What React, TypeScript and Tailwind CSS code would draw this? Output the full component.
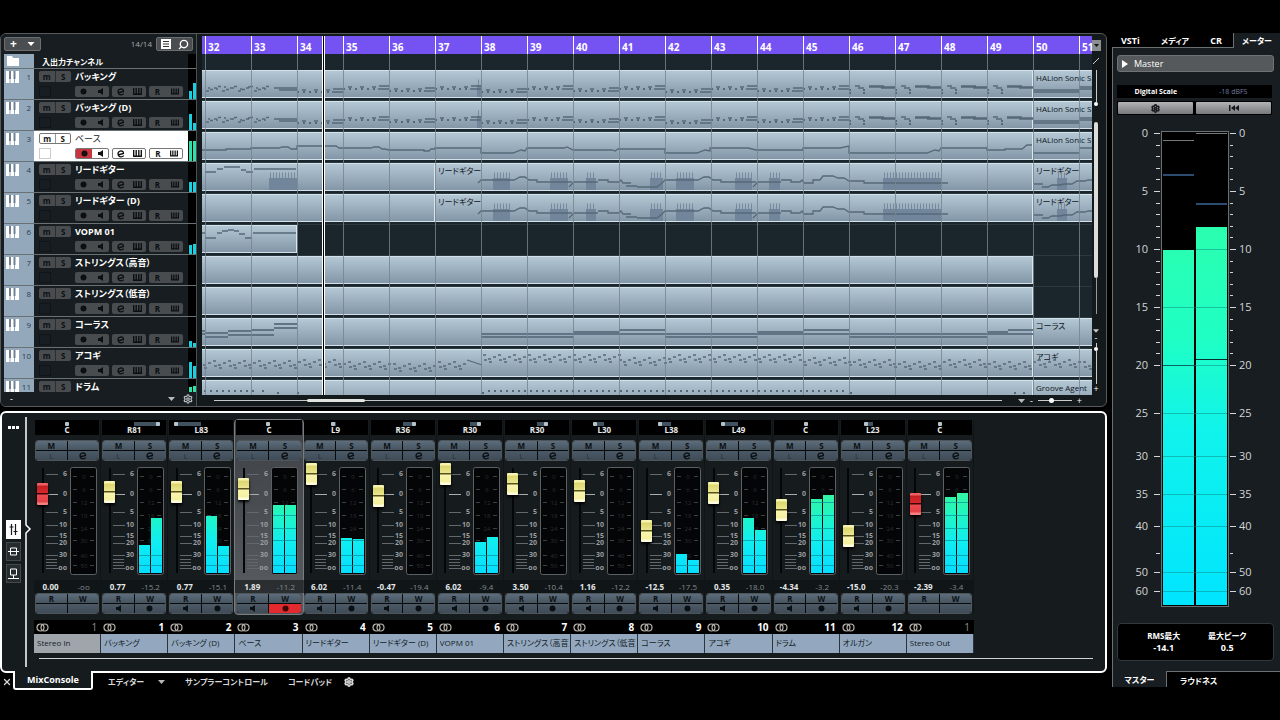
import React from 'react'
import { Settings, Search, X } from 'lucide-react'

type Clip = { width?: number; label?: string }
type Wave = { thin?: string; thick?: string; dots?: string; blocks?: number[][] }
type Track = { name: string; level: number[]; hot?: boolean; selected?: boolean; clips: Clip[]; wave: Wave }

const BAR = 46
const bars = Array.from({ length: 20 }, (_, i) => 32 + i)

// bar number -> x inside the lane
const bx = (bar: number) => Math.round(3 + BAR * (bar - 32))
const seg = (from: number, to: number, y: number) => `M${bx(from)} ${y}H${bx(to)}`

// backing guitar riff
const riff = () => {
    let thin = ''
    let dots = ''
    for (let b = 34; b < 46; b++) {
        const y = b === 34 || b === 38 || b === 42 ? 22 : b % 2 ? 19 : 21
        dots += seg(b, b + 0.75, y)
        for (let i = 0; i < 3; i++) thin += seg(b + 0.1 + i * 0.26, b + 0.2 + i * 0.26, y - 2)
        thin += seg(b + 0.75, b + 1, y) + seg(b + 0.78, b + 1, y - 3)
    }
    for (let b = 46; b < 50; b++) {
        dots += seg(b, b + 0.12, 20) + seg(b, b + 0.12, 23) + seg(b + 0.3, b + 0.42, 20) + seg(b + 0.3, b + 0.42, 23)
        thin += seg(b + 0.12, b + 0.24, 16) + seg(b + 0.2, b + 0.32, 18)
        thin += seg(b + 0.44, b + 0.75, 16) + seg(b + 0.44, b + 1, 17) + seg(b + 0.7, b + 1, 18)
    }
    for (let i = 0; i < 16; i++) {
        const x = 4 + i * 4
        thin += `M${x} ${21 - (i % 4) * 1.5}h3`
        if (i % 2) thin += `M${x - 2} ${19 - (i % 3)}h2`
    }
    thin += seg(33.5, 34, 18) + seg(33.6, 34, 20)
    thin += seg(50, 51, 20) + seg(50, 51, 22) + seg(51, 51.5, 17) + seg(51, 51.5, 19)
    return { thin, dots }
}

const bassLine =
    `M0 18H${bx(32.45)}V17H${bx(33)}V16H${bx(33.6)}l3 -1h6l3 2H${bx(34)}V14H${bx(34.85)}l3 2H${bx(35.6)}l3 -1h5l3 2h3l4 1H${bx(36.75)}v1h5l2 -2H${bx(37)}V16H${bx(38)}` +
    `V21H${bx(38.7)}l8 -3l4 1l2 -3H${bx(39.8)}l3 -1l6 3H${bx(40.85)}l3 1l3 -2H${bx(42)}V21H${bx(42.7)}l8 -3l5 1V16H${bx(43.8)}l8 2H${bx(45)}V16H${bx(45.8)}l9 -2V21H${bx(47.7)}l8 -3l4 1l2 -3H${bx(49)}V18H${bx(49.4)}V17H${bx(49.75)}l5 -4h5` +
    seg(50, 51, 21) + seg(51, 51.5, 16)

const phrase = (x: number) => `M${x} 20l3 -3h33l6 -3h5l4 3h8v2h35`

const leadStart = 'M3 9H14M15 6H21M22 4H38M39 7H44M44 9H51M52 6H94'
const leadLine =
    phrase(276) + 'M367 24l5 -5h24M396 17h10v2h11l2 -2l2 3h8M424 23h11M435 24h20l5 -4' +
    phrase(460) + 'M551 24l5 -5h23M579 17h10v2h9l2 -2l2 3h9v-3h7l3 -4h10l5 2h6l5 3h15v2h84' +
    'M832 21h9M840 24h6l4 -2h8l4 -1h8l5 -3h8l3 -1h9v2h6'

const leadBlocks = [
    [67, 28], [291, 17], [348, 18], [384, 10], [448, 13], [474, 18], [533, 17], [567, 11], [681, 58], [855, 10],
]

const strum = () => {
    let thin = ''
    for (let x = 1, i = 0; x < 890; x += 5, i++) {
        const bar = Math.floor((x - 3) / BAR) + 32
        if (bar === 37 && x > 262) continue
        const base = bar < 34 ? 14 : bar === 34 ? 13 : bar < 38 ? 15 + (bar % 2 ? 0 : 2) : bar < 41 ? 8 : bar === 41 ? 11 : bar < 46 ? 8 + (bar === 45 ? 3 : 0) : 13 + (bar % 2) * 2
        const up = i % 3
        thin += `M${x} ${base + 2 - up * 2}h3`
        if (up !== 1) thin += `M${x + 1} ${base + 5 - up}h3`
    }
    return thin + 'M265 11l15 5'
}

const choir =
    'M0 13H3M0 16H3' + seg(32, 32.5, 15) + seg(32, 32.5, 19) + seg(32.5, 33, 13) + seg(32.5, 33, 17) + seg(33, 33.5, 12) + seg(33, 33.5, 17) + seg(33.5, 34, 6) + seg(33.5, 34, 10) +
    [[38, 40], [42, 44], [46, 49]].map(([a, b]) => seg(a, b, 16) + seg(a, b, 19)).join('') +
    [40, 44].map((b) => seg(b, b + 1, 14) + seg(b, b + 1, 16) + seg(b + 1, b + 2, 12) + seg(b + 1, b + 2, 16)).join('') +
    seg(49, 49.45, 14) + seg(49, 50, 16) + seg(49.45, 50, 12)

const full = [{ width: 831 }]
const halion = [{ width: 831 }, { label: 'HALion Sonic S' }]
const lead = [{ width: 233 }, { width: 598, label: 'リードギター' }, { label: 'リードギター' }]

const tracks: Track[] = [
    { name: 'バッキング', level: [8, 16], clips: halion, wave: { ...riff(), blocks: [[275, 5]] } },
    { name: 'バッキング (D)', level: [16, 7], clips: halion, wave: { ...riff(), blocks: [[275, 5]] } },
    { name: 'ベース', level: [20, 20], hot: true, selected: true, clips: halion, wave: { thin: bassLine } },
    { name: 'リードギター', level: [10, 10], clips: lead, wave: { thin: leadStart + leadLine, blocks: leadBlocks } },
    { name: 'リードギター (D)', level: [], clips: lead, wave: { thin: leadLine, blocks: leadBlocks.slice(1) } },
    { name: 'VOPM 01', level: [9, 10], clips: [{ width: 95 }], wave: { thin: 'M0 8H3M3 13H14M15 8H20M20 6H26M26 5H32M32 6H37M37 9H43M43 13H50M51 8H94' } },
    { name: 'ストリングス（高音）', level: [], clips: full, wave: {} },
    { name: 'ストリングス（低音）', level: [], clips: full, wave: {} },
    { name: 'コーラス', level: [6, 4], clips: [{ width: 831 }, { label: 'コーラス' }], wave: { thick: choir } },
    { name: 'アコギ', level: [16, 12], clips: [{ width: 831 }, { label: 'アコギ' }], wave: { thin: strum() } },
    { name: 'ドラム', level: [5, 6], hot: true, clips: [{ width: 831 }, { label: 'Groove Agent' }], wave: { dots: 'M2 11H52M60 11h2M75 13h2M95 13h2M280 13h2M286 11H645M648 13h2M812 13h2M821 13h2' } },
]

type Strip = { name: string; no: number; pan: number; cap: number; db: string; peak: string; level: number[]; io?: boolean; selected?: boolean }

// cap is the fader centre, in pixels from the top of the fader area
const strips: Strip[] = [
    { name: 'Stereo In', no: 1, pan: 0, cap: 32, db: '0.00', peak: '-oo', level: [], io: true },
    { name: 'バッキング', no: 1, pan: 81, cap: 30, db: '0.77', peak: '-15.2', level: [28, 55] },
    { name: 'バッキング (D)', no: 2, pan: -83, cap: 30, db: '0.77', peak: '-15.1', level: [57, 27] },
    { name: 'ベース', no: 3, pan: 0, cap: 27, db: '1.89', peak: '-11.2', level: [68, 68], selected: true },
    { name: 'リードギター', no: 4, pan: -9, cap: 12, db: '6.02', peak: '-11.4', level: [35, 34] },
    { name: 'リードギター (D)', no: 5, pan: 36, cap: 34, db: '-0.47', peak: '-19.4', level: [] },
    { name: 'VOPM 01', no: 6, pan: 30, cap: 12, db: '6.02', peak: '-9.4', level: [31, 36] },
    { name: 'ストリングス（高音）', no: 7, pan: 30, cap: 22, db: '3.50', peak: '-10.4', level: [] },
    { name: 'ストリングス（低音）', no: 8, pan: -30, cap: 29, db: '1.16', peak: '-12.2', level: [] },
    { name: 'コーラス', no: 9, pan: -38, cap: 69, db: '-12.5', peak: '-17.5', level: [19, 13] },
    { name: 'アコギ', no: 10, pan: -49, cap: 31, db: '0.35', peak: '-18.0', level: [55, 43] },
    { name: 'ドラム', no: 11, pan: 0, cap: 48, db: '-4.34', peak: '-3.2', level: [74, 78] },
    { name: 'オルガン', no: 12, pan: -23, cap: 74, db: '-15.0', peak: '-20.3', level: [] },
    { name: 'Stereo Out', no: 1, pan: 0, cap: 42, db: '-2.39', peak: '-3.4', level: [76, 80], io: true },
]

const Piano = () => (
    <svg width="13" height="12" viewBox="0 0 13 12" className="shrink-0">
        <path d="M0 0h13v12H0z" fill="#fff" />
        <path d="M4 7v5M8.500 7v5" stroke="#8fa5b8" />
        <path d="M3 0h2v8H3zM7.500 0h2v8h-2z" fill="#6f8294" />
    </svg>
)

const Dot = () => <svg width="7" height="7" viewBox="0 0 7 7"><circle cx="3.500" cy="3.500" r="3" fill="currentColor" /></svg>

const Speaker = () => <svg width="5" height="7" viewBox="0 0 5 7"><path d="M5 0v7L2 5H0V2h2z" fill="currentColor" /></svg>

const Edit = () => (
    <svg width="8" height="8" viewBox="0 0 8 8" fill="none" stroke="currentColor" strokeWidth="1.300">
        <path d="M1 5l5.500 -1.500q0 -2.700 -2.500 -2.700q-3 .3 -3 3.200q.3 2.900 3 2.900q1.800 0 2.800 -1.200" />
    </svg>
)

const Keys = ({ w = 9 }: { w?: number }) => (
    <svg width={w} height="7" viewBox="0 0 9 7" fill="none" stroke="currentColor" strokeWidth="1.400">
        <path d="M.7 0v6.200h7.600V0M3.200 0v6M5.800 0v6" />
    </svg>
)

const Link = () => (
    <svg width="13" height="9" viewBox="0 0 13 9" fill="none" stroke="#b9b5ae" strokeWidth="1.200">
        <circle cx="4.500" cy="4.500" r="3.500" />
        <circle cx="8.500" cy="4.500" r="3.500" />
    </svg>
)

const Down = () => <svg width="7" height="4" viewBox="0 0 7 4" className="shrink-0"><path d="M0 0h7L3.500 4z" fill="#b6babc" /></svg>

const TrackRow = ({ track, index }: { track: Track; index: number }) => {
    const last = index === tracks.length - 1
    const group = track.selected
        ? 'flex w-[34px] h-[11px] border border-[#777] rounded-[2px] text-[#111] overflow-hidden'
        : 'flex w-[34px] h-[11px] bg-[#484c4f] rounded-[2px] text-[#0c0f11]'
    const cell = 'flex-1 flex items-center justify-center text-[8px] leading-[9px] font-bold'
    return (
        <li className={last ? 'flex h-[13px] overflow-hidden' : 'flex h-[31px] border-b border-[#6a7174]'}>
            <div className="w-[30px] bg-[#93a8bb] flex items-start justify-between pl-[2px] pr-[3px] pt-[2px] text-[8px] leading-[12px] text-[#2f3d4a]">
                <Piano />
                <span>{index + 1}</span>
            </div>
            <div className={track.selected ? 'w-[154px] pl-[5px] pt-[2px] bg-white text-[#16191b]' : 'w-[154px] pl-[5px] pt-[2px] bg-[#171d20] text-white'}>
                <div className="flex h-[11px] items-center">
                    <div className={track.selected ? 'flex w-[32px] h-[11px] border border-[#777] rounded-[2px] text-[#111] divide-x divide-[#999]' : 'flex w-[32px] h-[11px] bg-[#484c4f] rounded-[2px] text-[#0c0f11] divide-x divide-[#2a2e30]'}>
                        <button className={cell}>m</button>
                        <button className={cell}>S</button>
                    </div>
                    <span className={track.selected ? 'ml-1 text-[9px] leading-[11px] whitespace-nowrap' : 'ml-1 text-[9px] leading-[11px] font-bold whitespace-nowrap'}>{track.name}</span>
                </div>
                {!last && (
                    <div className="flex mt-1 gap-[3px]">
                        <input
                            type="checkbox"
                            aria-label={'freeze ' + track.name}
                            className={track.selected ? 'appearance-none w-3 h-[11px] border border-[#ccc] mr-[21px]' : 'appearance-none w-3 h-[11px] border border-[#101517] mr-[21px]'}
                        />
                        <div className={group}>
                            <button aria-label="record" className={track.selected ? cell + ' bg-[#c73540]' : cell}><Dot /></button>
                            <button aria-label="monitor" className={cell}><Speaker /></button>
                        </div>
                        <div className={group}>
                            <button aria-label="edit" className={cell}><Edit /></button>
                            <button aria-label="instrument" className={cell}><Keys /></button>
                        </div>
                        <div className={group}>
                            <button className={cell}>R</button>
                            <button aria-label="write" className={cell}><Keys w={8} /></button>
                        </div>
                    </div>
                )}
            </div>
            <div className="w-2 bg-black flex items-end justify-center gap-px">
                {track.level.map((h, i) => (
                    <div key={i} className={track.hot ? 'w-[3px] bg-[#2fe0a8]' : 'w-[3px] bg-[#19cfe0]'} style={{ height: h }} />
                ))}
            </div>
        </li>
    )
}

const TrackList = () => (
    <div className="w-[196px] shrink-0 pl-[3px] bg-[#171d20] border-r border-[#4b5255]">
        <div className="flex items-center h-5">
            <button aria-label="add track" className="flex items-center justify-around w-[37px] h-[14px] bg-[#4a4e50] border border-[#6b6f71] rounded-[2px] text-white text-[12px] leading-[12px] font-bold">
                <span>+</span>
                <svg width="8" height="4" viewBox="0 0 7 4"><path d="M0 0h7L3.500 4z" fill="#fff" /></svg>
            </button>
            <span className="ml-auto text-[8px] text-[#a6aaac]">14/14</span>
            <div className="flex w-[37px] h-[14px] ml-1 mr-[3px] bg-[#4a4e50] border border-[#6b6f71] rounded-[2px] text-white">
                <button aria-label="track list" className="flex-1 flex items-center justify-center">
                    <svg width="10" height="10" viewBox="0 0 10 10"><path d="M0 0h10v10H0z" fill="#fff" /><path d="M2 2.500h6M2 5h6M2 7.500h6" stroke="#333" /></svg>
                </button>
                <button aria-label="find track" className="flex-1 flex items-center justify-center"><Search className="w-[11px] h-[11px] -scale-x-100" strokeWidth={3} /></button>
            </div>
        </div>
        <div className="flex h-[15px] border-b border-[#6a7174]">
            <div className="w-[30px] bg-[#93a8bb] pl-[3px] pt-[2px]">
                <svg width="12" height="10" viewBox="0 0 12 10"><path d="M0 0h5l1 2h6v8H0z" fill="#fff" /></svg>
            </div>
            <div className="flex-1 pl-2 text-[8px] leading-[15px] font-bold text-white">入出力チャンネル</div>
            <div className="w-2 bg-black" />
        </div>
        <ul>
            {tracks.map((t, i) => <TrackRow key={t.name} track={t} index={i} />)}
        </ul>
        <div className="flex items-center h-[14px] pl-[6px] text-white text-[9px] leading-[12px]">
            <span className="mr-auto">-</span>
            <Down />
            <Settings className="w-[10px] h-[10px] ml-2 mr-[3px] text-[#b6babc]" strokeWidth={3} />
        </div>
    </div>
)

const Lane = ({ track, last }: { track: Track; last: boolean }) => (
    <div className={last ? 'relative flex h-[15px] overflow-hidden' : 'relative flex h-[31px] border-b border-[#2a3940]'}>
        {track.clips.map((c, i) => (
            <div
                key={i}
                className={(c.width ? 'shrink-0 border-r border-r-[#dbe7ee]' : 'flex-1 min-w-0') + ' h-[28px] overflow-hidden bg-linear-to-b from-[#b4c7d4] to-[#8397a8] border-y border-y-[#d3e2ea] pl-[3px] text-[8px] leading-[13px] text-[#0e161d] whitespace-nowrap'}
                style={{ width: c.width }}
            >
                {c.label}
            </div>
        ))}
        <svg className="absolute inset-0 w-full h-[28px]" fill="none" stroke="#566979">
            {track.wave.blocks?.map(([x, w]) => (
                <g key={x}>
                    <path d={`M${x} 15h${w}v12h-${w}z`} fill="#71869a" stroke="none" />
                    <path d={`M${x + 1} 12.500H${x + w}`} stroke="#768a9d" strokeWidth="6" strokeDasharray="1 2" />
                </g>
            ))}
            {track.wave.dots && <path d={track.wave.dots} strokeWidth="2" strokeDasharray="2 4" />}
            {track.wave.thick && <path d={track.wave.thick} strokeWidth="2" stroke="#617485" />}
            {track.wave.thin && <path d={track.wave.thin} strokeWidth="1.300" />}
        </svg>
    </div>
)

const Timeline = () => (
    <div className="flex-1 min-w-0 ml-[5px] pt-[2px]">
        <div className="relative overflow-hidden bg-[#1b262c]">
            <div className="flex h-[18px] pl-[3px] bg-[#7553f3]">
                {bars.map((b) => (
                    <div key={b} className="w-[46px] shrink-0 border-l border-white pl-[2px] pt-[5px] text-[10px] leading-[13px] font-bold text-white">{b}</div>
                ))}
            </div>
            <div className="h-4" />
            {tracks.map((t, i) => <Lane key={t.name} track={t} last={i === tracks.length - 1} />)}
            {/* bar lines */}
            <div className="absolute inset-x-0 top-[18px] bottom-0 flex pl-[3px] pointer-events-none">
                {bars.map((b) => <div key={b} className="w-[46px] shrink-0 border-l border-[#76848e]/80" />)}
            </div>
            {/* playhead */}
            <div className="absolute inset-y-0 left-[120px] w-[3px] bg-black border-x border-white" />
        </div>
        <div className="flex items-center h-[11px] pl-3 gap-2">
            <div className="flex-1 flex items-center h-px bg-[#c4c8ca] pl-[93px]">
                <div className="w-[58px] h-[3px] rounded bg-[#e4e4df]" />
            </div>
            <div className="flex items-center gap-[5px] ml-2 text-white text-[9px] leading-[10px]">
                <Down />
                <span>-</span>
                <input
                    type="range"
                    aria-label="horizontal zoom"
                    defaultValue={40}
                    className="appearance-none w-[34px] h-[5px] bg-[linear-gradient(#ccc,#ccc)] bg-[length:100%_1px] bg-center bg-no-repeat [&::-webkit-slider-thumb]:appearance-none [&::-webkit-slider-thumb]:w-[5px] [&::-webkit-slider-thumb]:h-[5px] [&::-webkit-slider-thumb]:rounded-full [&::-webkit-slider-thumb]:bg-white"
                />
                <span className="mr-[10px]">+</span>
            </div>
        </div>
    </div>
)

const VerticalScroll = () => (
    <div className="w-[14px] shrink-0 flex flex-col items-center pr-[6px] pt-[6px] pb-2 text-white text-[9px] leading-[10px]">
        <button aria-label="ruler menu" className="w-[9px] h-[11px] bg-[#8b8f91] flex items-center justify-center">
            <svg width="5" height="3" viewBox="0 0 5 3"><path d="M0 0h5L2.500 3z" fill="#111" /></svg>
        </button>
        <svg width="6" height="6" className="mt-[7px]"><path d="M0 6L6 0" stroke="#ccc" /></svg>
        <div className="w-px h-[32px] mt-[6px] bg-[#ccc]" />
        <div className="w-1 h-1 rounded-full bg-white" />
        <div className="w-1 h-[156px] mt-[16px] rounded bg-[#dcdcda]" />
        <div className="w-px h-[36px] bg-[#999]" />
        <svg width="6" height="4" viewBox="0 0 7 4" className="mt-[15px] shrink-0"><path d="M0 0h7L3.500 4z" fill="#ccc" /></svg>
        <span>-</span>
        <div className="w-px h-1 bg-[#ccc]" />
        <div className="w-1 h-1 rounded-full bg-white" />
        <div className="w-px h-[33px] bg-[#ccc]" />
        <span>+</span>
    </div>
)

const faderTicks: [number, string][] = [[12, '6'], [32, '0'], [50, '5'], [63, '10'], [74, '15'], [81, '20'], [93, '30'], [106, 'oo']]
const meterTicks: [number, string][] = [[14, '0'], [27, '6'], [40, '12'], [53, '18'], [66, '24'], [78, '30'], [93, '40'], [103, '50']]

const Fader = ({ strip }: { strip: Strip }) => (
    <div className="flex h-[118px] pl-[3px]">
        <input
            type="range"
            aria-label={strip.name + ' volume'}
            min={0}
            max={92}
            defaultValue={104 - strip.cap}
            className={
                'relative appearance-none [writing-mode:vertical-lr] [direction:rtl] w-[11px] h-[114px] mt-px bg-[linear-gradient(#050607,#050607)] bg-[length:2px_105px] bg-center bg-no-repeat [&::-webkit-slider-thumb]:appearance-none [&::-webkit-slider-thumb]:w-[11px] [&::-webkit-slider-thumb]:h-[22px] [&::-webkit-slider-thumb]:rounded-[1px] [&::-webkit-slider-thumb]:shadow-[0_2px_3px_#000] ' +
                (strip.io
                    ? '[&::-webkit-slider-thumb]:bg-[linear-gradient(#f06060_2px,#c01f24_3px,#d8282e_10px,#3a0506_10px,#3a0506_11px,#ee4a50_12px,#e04046_19px,#f58080_20px)]'
                    : '[&::-webkit-slider-thumb]:bg-[linear-gradient(#f7f4b0_2px,#dcd66e_3px,#ece690_10px,#55521c_10px,#55521c_11px,#f8f5ae_12px,#f5f0a0_19px,#fffde0_20px)]')
            }
        />
        <svg width="22" height="118" className="overflow-visible">
            {faderTicks.map(([y, label]) => (
                <g key={label}>
                    <path d={`M-2 ${y + 0.5}H10`} stroke={label === '0' ? '#a9adaf' : '#62686b'} />
                    <text x="19" y={y + 2} textAnchor="end" fontSize="7" fontWeight="bold" fill="#999da0">{label}</text>
                </g>
            ))}
            <path d="M-2 97.500H9M-2 100.500H9M-2 103.500H9" stroke="#62686b" />
        </svg>
        <svg width="27" height="118">
            <defs>
                <linearGradient id="level" gradientUnits="userSpaceOnUse" x1="0" y1="30" x2="0" y2="112">
                    <stop offset="0" stopColor="#35f5a0" />
                    <stop offset="0.25" stopColor="#22f5c0" />
                    <stop offset="0.6" stopColor="#10eef0" />
                    <stop offset="1" stopColor="#06dcff" />
                </linearGradient>
            </defs>
            <rect x="0.500" y="5.500" width="26" height="107" rx="2" fill="#040506" stroke="#5c6062" />
            {meterTicks.map(([y, label]) => (
                <g key={label}>
                    <path d={`M3 ${y + 0.5}h4M20 ${y + 0.5}h4`} stroke="#3c4143" />
                    <text x="14" y={y + 3} textAnchor="middle" fontSize="6" fill="#2b3032">{label}</text>
                </g>
            ))}
            {strip.level.map((h, i) => (
                <rect key={i} x={i ? 14 : 2} y={111 - h} width="11" height={h} fill="url(#level)" />
            ))}
            {strip.level.length > 0 && meterTicks.filter(([y]) => y > 111 - Math.min(...strip.level)).map(([y]) => (
                <path key={y} d={`M2 ${y + 0.5}h23`} stroke="#0a8f9a" strokeOpacity="0.7" />
            ))}
        </svg>
    </div>
)

const ChannelStrip = ({ strip }: { strip: Strip }) => {
    const btn = 'h-[9px] flex items-center justify-center bg-linear-to-b from-[#5d6d7c] to-[#46545f] text-[8px] leading-[9px] font-bold text-[#0b1014]'
    const low = 'h-[9px] flex items-center justify-center bg-linear-to-b from-[#4c5966] to-[#3f4c58] text-[8px] leading-[9px]'
    const box = 'grid grid-cols-2 gap-px mx-px bg-[#07090a] border border-[#4e555a] rounded-[3px] overflow-hidden text-[#0b1014]'
    const span = Math.round(Math.abs(strip.pan) * 0.3)
    return (
        <div className="min-w-0">
            <div className={strip.selected ? 'bg-linear-to-b from-[#3d4146] to-[#5a5d61] outline outline-[#7a7d80] rounded-[3px]' : 'border-r border-[#101416]'}>
                <div className="relative h-[15px] mx-px bg-black flex justify-center text-[8px] leading-[20px] font-bold text-[#e6e8e9]">
                    {strip.pan > 0 ? 'R' + strip.pan : strip.pan < 0 ? 'L' + -strip.pan : 'C'}
                    <svg width="64" height="5" className="absolute top-[2px] left-0">
                        <rect x={strip.pan < 0 ? 32 - span : 32} y="0" width={span} height="4" fill="#40525f" />
                        <rect x={30 + Math.sign(strip.pan) * span} y="0" width="4" height="4" rx="1" fill="#b6c3cb" />
                    </svg>
                </div>
                <div className="pt-[5px] pb-px">
                    <div className={box}>
                        <button className={btn}>M</button>
                        <button aria-label="solo" className={btn}>{strip.name !== 'Stereo In' && 'S'}</button>
                        <button className={low + ' text-[#26323c]'}>L</button>
                        <button aria-label="edit channel" className={low}><Edit /></button>
                    </div>
                </div>
                <Fader strip={strip} />
                <div className="flex h-[13px] bg-[#0e1214]/60 text-[8px] leading-[13px] text-center">
                    <span className="flex-1 font-bold text-[#e4e6e7]">{strip.db}</span>
                    <span className="flex-1 text-[#85898b]">{strip.peak}</span>
                </div>
                <div className={box}>
                    <button className={btn}>R</button>
                    <button className={btn}>W</button>
                    <button aria-label="monitor" className={low}>{!strip.io && <Speaker />}</button>
                    <button aria-label="record" className={strip.selected ? 'h-[9px] flex items-center justify-center bg-[#e02a2e] text-[#3d0506]' : low}>{!strip.io && <Dot />}</button>
                </div>
            </div>
            <div className="flex items-center justify-between h-[14px] mt-[6px] pl-[2px] pr-1 bg-black text-[10px] leading-[13px]">
                <Link />
                <span className={strip.io ? 'text-[#8d8f90]' : 'font-bold text-white'}>{strip.no}</span>
            </div>
            <div className={(strip.name === 'Stereo In' ? 'bg-[#9fa5ab]' : 'bg-[#93a8bf]') + ' h-[19px] pl-[3px] pr-px border-r border-[#2b343b] text-[8px] leading-[18px] text-[#141d25]'}>
                <div className="whitespace-nowrap overflow-hidden">{strip.name}</div>
            </div>
        </div>
    )
}

const MixRail = () => (
    <div className="w-[32px] shrink-0 flex">
        <div className="w-[22px] flex flex-col items-center">
            <svg width="11" height="3" className="mt-[13px]"><path d="M0 1.500h11" stroke="#fff" strokeWidth="3" strokeDasharray="3 1" /></svg>
            <button aria-label="faders" className="w-[15px] h-[19px] mt-[91px] bg-white text-[#16191b] flex items-center justify-center">
                <svg width="9" height="11" viewBox="0 0 9 11" fill="none" stroke="currentColor" strokeWidth="1.200"><path d="M2.500 0v11M6.500 0v11M.5 3h4M4.500 7.500h4" /></svg>
            </button>
            <button aria-label="inserts" className="w-[15px] h-[19px] mt-[3px] bg-[#262b2e] border border-[#43484a] text-white flex items-center justify-center">
                <svg width="11" height="9" viewBox="0 0 11 9" fill="none" stroke="currentColor"><path d="M0 4.500h11M2.500 1h6v7h-6z" /></svg>
            </button>
            <button aria-label="sends" className="w-[15px] h-[19px] mt-[3px] bg-[#262b2e] border border-[#43484a] text-white flex items-center justify-center">
                <svg width="11" height="12" viewBox="0 0 11 12" fill="none" stroke="currentColor"><path d="M2.500 1h6v6h-6zM5.500 7v4M0 10.500h11" /></svg>
            </button>
        </div>
        <svg width="8" height="250" className="mt-1 ml-px" fill="none" stroke="#fff" strokeWidth="1.500"><path d="M1 0v108l4 4l-4 4v134" /></svg>
    </div>
)

const LowerZone = () => (
    <>
        <section className="mt-1 border-2 border-white rounded-md bg-[#161b1e]">
            <div className="flex">
                <MixRail />
                <div className="flex-1 min-w-0 pt-[7px]">
                    <div className="grid grid-cols-14 w-[940px]">
                        {strips.map((s, i) => <ChannelStrip key={i} strip={s} />)}
                    </div>
                    <div className="h-px mt-[5px] ml-[5px] mr-3 mb-3 bg-[#d0d2d3]" />
                </div>
            </div>
        </section>
        <nav className="flex h-[17px] text-[8px] leading-[17px] font-bold text-[#d7d9da] whitespace-nowrap">
            <button aria-label="close" className="w-[13px] flex items-center justify-center"><X className="w-[10px] h-[10px]" strokeWidth={3} /></button>
            <button className="relative w-[80px] -mt-[2px] bg-[#161b1e] border-2 border-t-0 border-white rounded-b-[3px] text-[9px] text-white">MixConsole</button>
            <button className="ml-[15px]">エディター</button>
            <button aria-label="editor menu" className="ml-[14px]"><Down /></button>
            <button className="ml-5">サンプラーコントロール</button>
            <button className="ml-5">コードパッド</button>
            <button aria-label="set up tabs" className="ml-3"><Settings className="w-[10px] h-[10px]" strokeWidth={4} /></button>
        </nav>
    </>
)

// dB -> y in the master meter drawing
const scale: [number, number][] = [[0, 10], [5, 68], [10, 126], [15, 184], [20, 242], [25, 290], [30, 333], [35, 371], [40, 403], [50, 449], [60, 468]]
const minor = Array.from({ length: 20 }, (_, i) => i).filter((i) => i % 5).map((i) => Math.round(10 + i * 11.6)).concat(430)

const MasterMeter = () => (
    <svg width="156" height="490" viewBox="0 0 156 490" className="block">
        <defs>
            <linearGradient id="master" gradientUnits="userSpaceOnUse" x1="0" y1="100" x2="0" y2="482">
                <stop offset="0" stopColor="#2bffae" />
                <stop offset="0.3" stopColor="#1fffc4" />
                <stop offset="0.55" stopColor="#10f3ec" />
                <stop offset="1" stopColor="#00e5ff" />
            </linearGradient>
        </defs>
        <rect x="44.500" y="8.500" width="67" height="475" fill="#000" stroke="#6b7072" />
        <rect x="46" y="127" width="31" height="355" fill="url(#master)" />
        <rect x="79" y="104" width="31" height="378" fill="url(#master)" />
        <path d="M46 17.500h31M79 10.500h31" stroke="#77797a" />
        <path d="M46 52h31M79 81h31" stroke="#3a6594" strokeWidth="1.500" />
        <path d="M46 242.500h31M79 236.500h31" stroke="#06302c" />
        {scale.filter(([db]) => db >= 10).map(([db, y]) => (
            <path key={db} d={`M${db === 10 ? 79 : 46} ${y + 0.5}H110`} stroke="#0b8f86" strokeOpacity="0.55" />
        ))}
        {scale.map(([db, y]) => (
            <g key={db} fill="#d3d6d7" fontSize="11">
                <path d={`M37 ${y + 0.5}h6M113 ${y + 0.5}h6`} stroke="#d3d6d7" />
                <text x="31" y={y + 4} textAnchor="end" stroke="none">{db}</text>
                <text x="122" y={y + 4} stroke="none">{db}</text>
            </g>
        ))}
        {minor.map((y) => <path key={y} d={`M39 ${y + 0.5}h4M113 ${y + 0.5}h3`} stroke="#d3d6d7" />)}
    </svg>
)

const MeterZone = () => (
    <aside className="w-[168px] shrink-0 ml-[5px] text-white">
        <nav className="flex h-[15px] text-[8px] leading-[15px] font-bold whitespace-nowrap">
            <div className="flex-1 flex justify-between pl-[9px] pr-[11px] border-b border-[#6b7072]">
                <button className="text-[9px]">VSTi</button>
                <button>メディア</button>
                <button className="text-[9px]">CR</button>
            </div>
            <button className="w-[47px] border-l border-[#6b7072] bg-[#171d20]">メーター</button>
        </nav>
        <div className="bg-[#171d20] border-l border-[#6b7072] px-1">
            <div className="pt-[7px] pr-[2px]">
                <button className="w-full h-[17px] flex items-center gap-[6px] pl-1 bg-[#55595b] border border-[#6f7375] rounded-[3px] text-[9px] leading-[15px]">
                    <svg width="6" height="8"><path d="M0 0l6 4l-6 4z" fill="#fff" /></svg>
                    Master
                </button>
            </div>
            <div className="flex h-[13px] mt-[13px] mr-1 bg-black text-[7px] leading-[13px] text-center">
                <span className="flex-1 font-bold">Digital Scale</span>
                <span className="flex-1 text-[#7279a0]">-18 dBFS</span>
            </div>
            <div className="flex mt-[3px] mr-1 p-px gap-[3px] bg-black text-[#15181a]">
                <button aria-label="meter settings" className="flex-1 h-[12px] flex items-center justify-center bg-linear-to-b from-[#b2b4b5] to-[#77797a] rounded-[1px]"><Settings className="w-[9px] h-[9px]" strokeWidth={4} /></button>
                <button aria-label="reset meter" className="flex-1 h-[12px] flex items-center justify-center bg-linear-to-b from-[#b2b4b5] to-[#77797a] rounded-[1px]">
                    <svg width="10" height="6"><path d="M0 0h1.500v6H0zM6 0v6L2 3zM10 0v6L6 3z" fill="currentColor" /></svg>
                </button>
            </div>
            <div className="mt-[8px]"><MasterMeter /></div>
            <dl className="flex h-[38px] mt-[10px] mr-[2px] px-[14px] pt-[6px] bg-black border border-[#33383b] rounded text-[8px] leading-[12px] font-bold text-center whitespace-nowrap">
                <div className="flex-1"><dt>RMS最大</dt><dd className="text-[9px]">-14.1</dd></div>
                <div className="flex-1"><dt>最大ピーク</dt><dd className="text-[9px]">0.5</dd></div>
            </dl>
            <div className="h-[10px]" />
        </div>
        <nav className="flex h-[16px] text-[8px] leading-[18px] font-bold">
            <button className="w-[54px] bg-[#171d20] border-l border-[#6b7072]">マスター</button>
            <div className="flex-1 border-t border-l border-[#6b7072] pl-[13px]"><button>ラウドネス</button></div>
        </nav>
    </aside>
)

const App = () => {
    return (
        <div className="min-h-screen bg-black pt-[33px] flex items-start [font-family:'Open_Sans','Noto_Sans_CJK_JP',sans-serif] [font-feature-settings:'palt']">
            <main className="flex-1 min-w-0">
                <section className="flex border border-[#565a5c] rounded-md bg-[#14191c] overflow-hidden">
                    <TrackList />
                    <Timeline />
                    <VerticalScroll />
                </section>
                <LowerZone />
            </main>
            <MeterZone />
        </div>
    )
}

export default App
